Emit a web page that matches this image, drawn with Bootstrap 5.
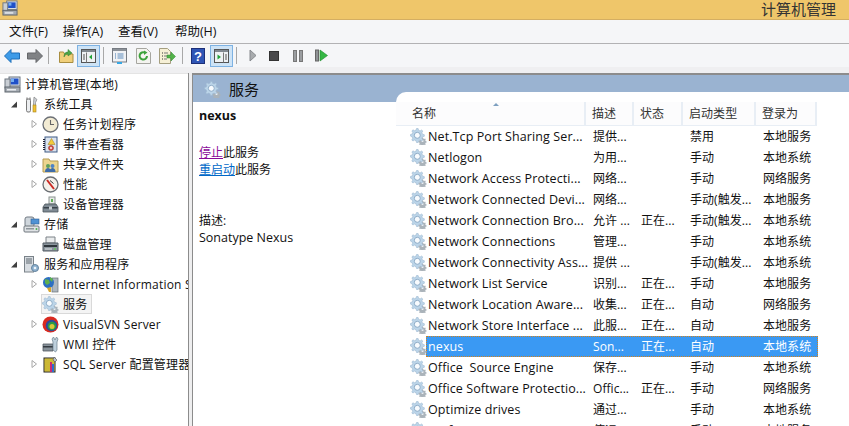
<!DOCTYPE html>
<html lang="zh">
<head>
<meta charset="utf-8">
<title>计算机管理</title>
<link href="https://cdn.jsdelivr.net/npm/bootstrap@5.3.0/dist/css/bootstrap.min.css" rel="stylesheet">
<style>
html,body{height:100%}
body{width:849px;height:426px;overflow:hidden;background:#fff;color:#111;font:12px/1.25 "Open Sans","Noto Sans CJK SC",sans-serif}
svg{display:block;flex:none}
.titlebar{height:20px;background:#efc66a;border-bottom:1px solid #d4ae62;padding:0 13px 0 2px}
.titlebar span{font-size:15px;line-height:18px;color:#333}
.menubar{height:24px;background:#f5f6f8;border-bottom:1px solid #b2b2b4;padding-left:9px;gap:15px;font-size:12.5px}
.menubar span:last-child{margin-left:2px}
.toolbar{height:23px;background:#f5f6f8;padding-left:4px}
.tsep{width:1px;height:17px;background:#a8a8a8;flex:none}
.tog{width:23px;height:22px;background:#cde3f6;border:1px solid #7db2e3;flex:none}
.gapstrip{height:6px;background:#efeff1}
.mainpane{height:353px;background:#efeff1}
.treepane{width:188px;background:#fff;border-top:1px solid #e4e4e4;overflow:hidden;flex:none}
.splitter{width:4px;background:#eeeeef;border-left:1px solid #8c8c8c;flex:none}
.trow{height:20px;white-space:nowrap;font-size:12px;letter-spacing:.2px}
.tw{width:8px;height:20px;flex:none;margin-right:4px}
.l0{padding-left:4px}.l1{padding-left:10px}.l2{padding-left:30px}
.l1 .tw{margin-right:5px}
.tico{margin-right:4px}
.tsel{background:#f4f4f4;outline:1px solid #d9d9d9;outline-offset:-1px;width:51px;height:20px;margin-left:-1px;padding-left:1px}
.servpane{flex:1;min-width:0;border-top:2px solid #8c8c8c;border-left:1px solid #8c8c8c;background:#fff;position:relative}
.servhead{height:27px;background:#9ab3d1;padding:1px 0 0 11px;gap:8px;font-size:15px}
.detail{position:absolute;left:6px;top:32px;width:190px;font-size:12px;line-height:17px}
.detail b{font-size:12.5px}
.detail a.st{color:#8a0a99}.detail a.re{color:#0068c8}
.stoprow{margin-top:20px}
.descrow{margin-top:34px}
.latin{font-size:12.5px}
.sheet{position:absolute;left:203px;top:17px;right:0;bottom:0;background:#fff;border-top-left-radius:10px;padding-top:10px;overflow:hidden}
.grow{display:grid;grid-template-columns:190px 48px 49px 73px 61px;height:21px;align-items:center;white-space:nowrap;font-size:12px;letter-spacing:.05px;width:421px}
.grow>div{overflow:hidden;padding-left:7px}
.ghead{height:24px;border-bottom:1px solid #e8eef5;color:#333;position:relative}
.ghead>div{height:23px;line-height:23px;border-right:2px solid #e8eef5;background:#fcfcfd;padding-left:6px}
.ghead>div:first-child{padding-left:16px}
.sortm{position:absolute;left:97px;top:1px;width:0;height:0;border:3.5px solid transparent;border-top:0;border-bottom:3px solid #7d9fc0}
.grow .nm{display:flex;align-items:center;padding-left:14px;gap:1px;overflow:visible;font-size:12.5px;letter-spacing:.1px}
.rsel{color:#fff;position:relative}
.rsel>div{position:relative;z-index:1}
.rsel::before{content:"";position:absolute;left:30px;width:392px;height:21px;background:#3a99f3;outline:1px dotted #d2821e;outline-offset:-1px}
.gd{width:17px;height:17px}
.ml7{margin-left:7px}.ml8{margin-left:8px}.ml9{margin-left:9px}.ml5{margin-left:5px}.ml12{margin-left:12px}
.sp1{margin:0 10px 0 5px}.sp2{margin:0 8px 0 3px}.sp3{margin:0 8px 0 6px}.sp4{margin:0 12px 0 3px}
.tgl{margin-left:3px}
</style>
</head>
<body>
<svg width="0" height="0" style="position:absolute">
<defs>
<symbol id="gear" viewBox="0 0 17 17">
<path d="M12 9.500l1 .1.300 1 .9.400.9-.4.600.7-.4.900.3.900 1 .3v1l-1 .3-.3.900.4.900-.7.6-.9-.4-.9.3-.3 1h-1l-.3-1-.9-.3-.9.400-.6-.7.400-.9-.3-.9-1-.3v-1l1-.3.300-.9-.4-.9.700-.6.900.4.900-.4z" fill="#aab3ba"/>
<circle cx="12.500" cy="13" r="1.100" fill="#eef2f5"/>
<path d="M6.500 .5l1.600 0 .5 1.800 1.500.6 1.600-.9 1.100 1.100-.9 1.600.6 1.500 1.800.5v1.600l-1.800.5-.6 1.500.9 1.600-1.100 1.100-1.600-.9-1.500.6-.5 1.800H6.500l-.5-1.800-1.500-.6-1.600.9-1.100-1.100.9-1.600-.6-1.500L.5 8.100V6.500l1.700-.5.6-1.500-.9-1.600 1.100-1.100 1.600.9 1.500-.6z" fill="#bcd5e9" stroke="#9db9d1" stroke-width=".6"/>
<circle cx="7.300" cy="7.300" r="3" fill="#f8fbfe" stroke="#8fadc8"/>
</symbol>
<symbol id="computer" viewBox="0 0 17 17">
<rect x="5" y="1" width="11" height="9" fill="#dfe4ea" stroke="#6a7480"/>
<rect x="6.500" y="2.500" width="8" height="6" fill="#1f50c8"/>
<path d="M7 3h3v3H7z" fill="#74aef0"/>
<rect x="1" y="3" width="5" height="9" fill="#c9ced4" stroke="#6f7780"/>
<rect x="1" y="11" width="15" height="5" fill="#a5abb2" stroke="#5f666e"/>
<rect x="3" y="13" width="9" height="1.500" fill="#e9ecef"/>
</symbol>
<symbol id="tools" viewBox="0 0 17 17">
<path d="M4 1.500v3M7 1.500v3" stroke="#888" stroke-width="1.300"/>
<rect x="3.500" y="3" width="4" height="13" rx="1.500" fill="#eceef0" stroke="#777"/>
<path d="M11 1l3 2.500-1.500 3v3h-2v-3z" fill="#caced3" stroke="#777" stroke-width=".6"/>
<rect x="10" y="9" width="3" height="7" fill="#f1c232" stroke="#a3811c" stroke-width=".6"/>
</symbol>
<symbol id="clock" viewBox="0 0 17 17">
<circle cx="8.500" cy="8.500" r="7.500" fill="#f3ecd4" stroke="#6c7076" stroke-width="1.300"/>
<path d="M8.500 4v4.500H12" fill="none" stroke="#666" stroke-width="1.100"/>
</symbol>
<symbol id="evlog" viewBox="0 0 17 17">
<rect x="3" y="1" width="12" height="15" fill="#dbe4ef" stroke="#3f5b85"/>
<path d="M2 3v11" stroke="#223" stroke-width="2" stroke-dasharray="1 1"/>
<path d="M9.500 2.500l3.500 6H6z" fill="#f3cb3c" stroke="#9a7a18" stroke-width=".5"/>
<circle cx="9" cy="12" r="2.500" fill="#d8534a" stroke="#96302a" stroke-width=".6"/>
<circle cx="9" cy="12" r=".9" fill="#fff"/>
</symbol>
<symbol id="share" viewBox="0 0 17 17">
<path d="M1 3h6l1 2h8v11H1z" fill="#ecd58f" stroke="#b49a52"/>
<circle cx="6" cy="10" r="2" fill="#5fa05a"/>
<circle cx="10.500" cy="10" r="2" fill="#4d83c7"/>
<path d="M3 16c0-3 1.500-4 3-4s3 1 3 4zM8 16c0-3 1-4 2.500-4s3 1 3 4z" fill="#3f6da8"/>
</symbol>
<symbol id="perf" viewBox="0 0 17 17">
<circle cx="8.500" cy="8.500" r="7.500" fill="#f4f1ea" stroke="#6a6f74" stroke-width="1.300"/>
<path d="M5 4l7 9" stroke="#cc2b25" stroke-width="2"/>
<path d="M8 4.500l3.500 3" stroke="#333" stroke-width="1"/>
</symbol>
<symbol id="device" viewBox="0 0 17 17">
<rect x="7" y="1" width="6" height="7" fill="#e8ece9" stroke="#8a9290"/>
<rect x="9" y="3" width="2" height="3" fill="#5fae55"/>
<path d="M3 8h11l2 3v5H1v-5z" fill="#7f8a93" stroke="#4c555c" stroke-width=".8"/>
<rect x="1.500" y="11" width="14" height="1.500" fill="#39424a"/>
<rect x="7" y="10.500" width="3" height="3" fill="#c8ced2"/>
</symbol>
<symbol id="storage" viewBox="0 0 17 17">
<rect x="2" y="1" width="9" height="10" rx="2" fill="#cfd6dc" stroke="#727b84"/>
<rect x="8" y="3" width="8" height="5" fill="#4f92d4" stroke="#2f5f92" stroke-width=".6"/>
<rect x="1" y="10" width="15" height="6" rx="1" fill="#dfe2e5" stroke="#6f767d"/>
<rect x="3" y="12" width="8" height="1.500" fill="#8d959c"/>
<circle cx="13.500" cy="13" r="1" fill="#4caf50"/>
</symbol>
<symbol id="disk" viewBox="0 0 17 17">
<path d="M4 1h9v6H4z" fill="#e9ebec" stroke="#7c8388"/>
<path d="M1 7h15v8H1z" fill="#8c969e" stroke="#535b62"/>
<rect x="2" y="9" width="13" height="2" fill="#2f363c"/>
<circle cx="13" cy="13" r="1" fill="#63c75e"/>
<rect x="3" y="12.500" width="7" height="1" fill="#dfe3e6"/>
</symbol>
<symbol id="server" viewBox="0 0 17 17">
<rect x="1.500" y="0.500" width="9" height="15.500" fill="#d8dde2" stroke="#7a8289"/>
<path d="M3 3h6M3 5h6M3 7h6" stroke="#5f6870" stroke-width="1"/>
<circle cx="12" cy="12" r="3.500" fill="#8fb2d0" stroke="#66859f"/>
<circle cx="12" cy="12" r="1.300" fill="#eef5fb"/>
</symbol>
<symbol id="iis" viewBox="0 0 17 17">
<rect x="10" y="2" width="6" height="14" fill="#aeb7bf" stroke="#676f76" stroke-width=".7"/>
<circle cx="6.500" cy="6.500" r="5.500" fill="#2c6fc2"/>
<path d="M3 3l4 1 1 3-3 2-2-2zM8 1l3 2-1 3-2-2z" fill="#5fb04d"/>
<path d="M5 12l2 4h2v-5z" fill="#d7a52b"/>
</symbol>
<symbol id="svn" viewBox="0 0 17 17">
<circle cx="8.500" cy="8.500" r="8" fill="#d92a20"/>
<circle cx="9.500" cy="9.500" r="5.800" fill="#2d4a9b"/>
<circle cx="10" cy="10" r="4.300" fill="#2c9a44"/>
<circle cx="10" cy="10.500" r="2.500" fill="#d8c938"/>
</symbol>
<symbol id="wmi" viewBox="0 0 17 17">
<path d="M1 8h10v7H1z" fill="#88929a" stroke="#505860" stroke-width=".8"/>
<rect x="1" y="10" width="10" height="1.500" fill="#343b41"/>
<path d="M11 14V6l-1-3 1.500-2L13 4l1.500-3L16 3l-1 3v8l-1.500 2z" fill="#bfd0dc" stroke="#6c7f8c" stroke-width=".7"/>
</symbol>
<symbol id="sql" viewBox="0 0 17 17">
<rect x="2" y="2" width="11" height="14" fill="#f6df4a" stroke="#222"/>
<path d="M3 4h9M3 6h9M3 8h9M3 10h9M3 12h9M3 14h9" stroke="#8e7d1a" stroke-width=".8"/>
<path d="M8 6h2v10H8z" fill="#cb2b6f"/><path d="M10 8h2v8h-2z" fill="#2b6fd0"/>
<path d="M12 1l3 3-2 2-2-2z" fill="#b9c2c9" stroke="#555" stroke-width=".6"/>
</symbol>
</defs>
</svg>

<header class="titlebar d-flex justify-content-between align-items-start">
<svg width="16" height="16"><use href="#computer"/></svg>
<span>计算机管理</span>
</header>
<nav class="menubar d-flex align-items-center">
<span>文件(F)</span><span>操作(A)</span><span>查看(V)</span><span>帮助(H)</span>
</nav>
<div class="toolbar d-flex align-items-center">
<svg width="16" height="14" viewBox="0 0 16 14"><path d="M7 .5v3.500h8.500v6H7v3.500L.5 7z" fill="#3d9be8" stroke="#1f6fb8"/></svg>
<svg class="ml7" width="16" height="14" viewBox="0 0 16 14"><path d="M9 .5v3.500H.5v6H9v3.500L15.500 7z" fill="#808285" stroke="#65676a"/></svg>
<div class="tsep sp1"></div>
<svg width="15" height="15" viewBox="0 0 15 15"><path d="M.5 4h4l1 2h8.500v8.500H.500z" fill="#f0cf7a" stroke="#a88d3f"/><path d="M5 9c0-3 1-5 4-5V1.500L13 5 9 8V6C7 6 6 7 5 9z" fill="#4da64a" stroke="#2f7d2e" stroke-width=".5"/></svg>
<div class="tog tgl d-flex align-items-center justify-content-center"><svg width="15" height="14" viewBox="0 0 15 14"><rect x=".5" y=".5" width="14" height="13" fill="#eef1f4" stroke="#555"/><rect x="1" y="1" width="13" height="2" fill="#808890"/><path d="M5.500 3.500v10" stroke="#777"/><path d="M2 6h2M2 8h2M2 10h2" stroke="#555"/><path d="M11 5.500v5L8 8z" fill="#23a33a"/></svg></div>
<div class="tsep sp2"></div>
<svg width="15" height="16" viewBox="0 0 15 16"><rect x=".5" y=".5" width="14" height="13.500" fill="#f0f2f5" stroke="#767b82"/><rect x="1" y="1" width="13" height="2" fill="#8b9198"/><path d="M3 6h1M3 8h1M3 10h1" stroke="#3f74ad"/><path d="M5.500 6h6M5.500 8h6M5.500 10h6" stroke="#5f8dbd"/><rect x="5" y="14" width="5" height="2" fill="#35a7e5"/></svg>
<svg class="ml9" width="15" height="16" viewBox="0 0 15 16"><path d="M.5.500h10l4 4v11H.500z" fill="#f4f4f0" stroke="#a6a6a0"/><path d="M11 8A3.700 3.700 0 1 1 9 4.600" fill="none" stroke="#3ca23b" stroke-width="2"/><path d="M8 2.500l3.500 2L8 7z" fill="#3ca23b"/></svg>
<svg class="ml8" width="17" height="16" viewBox="0 0 17 16"><path d="M.5.500h8l3 3v12H.500z" fill="#f6f0d6" stroke="#a59f80"/><path d="M3 5h1M3 8h1M3 11h1" stroke="#333"/><path d="M5 5h4M5 8h4M5 11h3" stroke="#777"/><path d="M8 7h4V4l4.500 4.500L12 13v-3H8z" fill="#53b24a" stroke="#2f8a30" stroke-width=".5"/></svg>
<div class="tsep sp3"></div>
<svg width="14" height="16" viewBox="0 0 14 16"><rect x=".5" y=".5" width="13" height="15" fill="#2f55b5" stroke="#1c2f78"/><text x="7" y="13" font-family="Liberation Sans" font-weight="700" font-size="13" fill="#fff" text-anchor="middle">?</text></svg>
<div class="tog d-flex align-items-center justify-content-center ml5"><svg width="15" height="14" viewBox="0 0 15 14"><rect x=".5" y=".5" width="14" height="13" fill="#eef1f4" stroke="#555"/><rect x="1" y="1" width="13" height="2" fill="#808890"/><path d="M9.500 3.500v10" stroke="#777"/><path d="M11 6h2M11 8h2M11 10h2" stroke="#555"/><path d="M3.500 5.500v5L7 8z" fill="#23a33a"/></svg></div>
<div class="tsep sp4"></div>
<svg width="8" height="13" viewBox="0 0 8 13"><path d="M1 1l6 5.500L1 12z" fill="#a8abae" stroke="#868a8e"/></svg>
<svg class="ml12" width="10" height="10" viewBox="0 0 10 10"><rect x=".5" y=".5" width="9" height="9" fill="#4a4a4c" stroke="#333"/></svg>
<svg style="margin-left:14px" width="10" height="12" viewBox="0 0 10 12"><rect x=".5" y=".5" width="3" height="11" fill="#9a9da0" stroke="#777"/><rect x="6.500" y=".5" width="3" height="11" fill="#9a9da0" stroke="#777"/></svg>
<svg class="ml12" width="13" height="13" viewBox="0 0 13 13"><rect x=".5" y="1" width="3" height="11" fill="#8f9296" stroke="#666"/><path d="M5 1l7.500 5.500L5 12z" fill="#35b744" stroke="#1e8a2e" stroke-width=".6"/></svg>
</div>
<div class="gapstrip"></div>

<main class="mainpane d-flex">
<aside class="treepane">
<div class="trow d-flex align-items-center l0"><svg class="tico" width="17" height="17"><use href="#computer"/></svg>计算机管理(本地)</div>
<div class="trow d-flex align-items-center l1"><svg class="tw" viewBox="0 0 8 20"><path d="M1 13.500L7 13.500 7 7.500z" fill="#404040"/></svg><svg class="tico" width="17" height="17"><use href="#tools"/></svg>系统工具</div>
<div class="trow d-flex align-items-center l2"><svg class="tw" viewBox="0 0 8 20"><path d="M2 6.500l4.500 3.500L2 13.500z" fill="#fff" stroke="#a6a6a6"/></svg><svg class="tico" width="17" height="17"><use href="#clock"/></svg>任务计划程序</div>
<div class="trow d-flex align-items-center l2"><svg class="tw" viewBox="0 0 8 20"><path d="M2 6.500l4.500 3.500L2 13.500z" fill="#fff" stroke="#a6a6a6"/></svg><svg class="tico" width="17" height="17"><use href="#evlog"/></svg>事件查看器</div>
<div class="trow d-flex align-items-center l2"><svg class="tw" viewBox="0 0 8 20"><path d="M2 6.500l4.500 3.500L2 13.500z" fill="#fff" stroke="#a6a6a6"/></svg><svg class="tico" width="17" height="17"><use href="#share"/></svg>共享文件夹</div>
<div class="trow d-flex align-items-center l2"><svg class="tw" viewBox="0 0 8 20"><path d="M2 6.500l4.500 3.500L2 13.500z" fill="#fff" stroke="#a6a6a6"/></svg><svg class="tico" width="17" height="17"><use href="#perf"/></svg>性能</div>
<div class="trow d-flex align-items-center l2"><span class="tw"></span><svg class="tico" width="17" height="17"><use href="#device"/></svg>设备管理器</div>
<div class="trow d-flex align-items-center l1"><svg class="tw" viewBox="0 0 8 20"><path d="M1 13.500L7 13.500 7 7.500z" fill="#404040"/></svg><svg class="tico" width="17" height="17"><use href="#storage"/></svg>存储</div>
<div class="trow d-flex align-items-center l2"><span class="tw"></span><svg class="tico" width="17" height="17"><use href="#disk"/></svg>磁盘管理</div>
<div class="trow d-flex align-items-center l1"><svg class="tw" viewBox="0 0 8 20"><path d="M1 13.500L7 13.500 7 7.500z" fill="#404040"/></svg><svg class="tico" width="17" height="17"><use href="#server"/></svg>服务和应用程序</div>
<div class="trow d-flex align-items-center l2"><svg class="tw" viewBox="0 0 8 20"><path d="M2 6.500l4.500 3.500L2 13.500z" fill="#fff" stroke="#a6a6a6"/></svg><svg class="tico" width="17" height="17"><use href="#iis"/></svg>Internet Information Services (IIS)</div>
<div class="trow d-flex align-items-center l2"><span class="tw"></span><div class="tsel d-flex align-items-center"><svg class="tico" width="17" height="17"><use href="#gear"/></svg>服务</div></div>
<div class="trow d-flex align-items-center l2"><svg class="tw" viewBox="0 0 8 20"><path d="M2 6.500l4.500 3.500L2 13.500z" fill="#fff" stroke="#a6a6a6"/></svg><svg class="tico" width="17" height="17"><use href="#svn"/></svg>VisualSVN Server</div>
<div class="trow d-flex align-items-center l2"><span class="tw"></span><svg class="tico" width="17" height="17"><use href="#wmi"/></svg>WMI 控件</div>
<div class="trow d-flex align-items-center l2"><svg class="tw" viewBox="0 0 8 20"><path d="M2 6.500l4.500 3.500L2 13.500z" fill="#fff" stroke="#a6a6a6"/></svg><svg class="tico" width="17" height="17"><use href="#sql"/></svg>SQL Server 配置管理器</div>
</aside>
<div class="splitter"></div>
<section class="servpane">
<div class="servhead d-flex align-items-center"><svg width="17" height="17"><use href="#gear"/></svg><span>服务</span></div>
<div class="detail">
<b>nexus</b>
<div class="stoprow"><a class="st" href="#">停止</a>此服务</div>
<div><a class="re" href="#">重启动</a>此服务</div>
<div class="descrow">描述:</div>
<div class="latin">Sonatype Nexus</div>
</div>
<div class="sheet">
<div class="grow ghead"><div>名称</div><div>描述</div><div>状态</div><div>启动类型</div><div>登录为</div><i class="sortm"></i></div>
<div class="grow"><div class="nm"><svg class="gd"><use href="#gear"/></svg><span>Net.Tcp Port Sharing Ser...</span></div><div>提供...</div><div></div><div>禁用</div><div>本地服务</div></div>
<div class="grow"><div class="nm"><svg class="gd"><use href="#gear"/></svg><span>Netlogon</span></div><div>为用...</div><div></div><div>手动</div><div>本地系统</div></div>
<div class="grow"><div class="nm"><svg class="gd"><use href="#gear"/></svg><span>Network Access Protecti...</span></div><div>网络...</div><div></div><div>手动</div><div>网络服务</div></div>
<div class="grow"><div class="nm"><svg class="gd"><use href="#gear"/></svg><span>Network Connected Devi...</span></div><div>网络...</div><div></div><div>手动(触发...</div><div>本地服务</div></div>
<div class="grow"><div class="nm"><svg class="gd"><use href="#gear"/></svg><span>Network Connection Bro...</span></div><div>允许 ...</div><div>正在...</div><div>手动(触发...</div><div>本地系统</div></div>
<div class="grow"><div class="nm"><svg class="gd"><use href="#gear"/></svg><span>Network Connections</span></div><div>管理...</div><div></div><div>手动</div><div>本地系统</div></div>
<div class="grow"><div class="nm"><svg class="gd"><use href="#gear"/></svg><span>Network Connectivity Ass...</span></div><div>提供 ...</div><div></div><div>手动(触发...</div><div>本地系统</div></div>
<div class="grow"><div class="nm"><svg class="gd"><use href="#gear"/></svg><span>Network List Service</span></div><div>识别...</div><div>正在...</div><div>手动</div><div>本地服务</div></div>
<div class="grow"><div class="nm"><svg class="gd"><use href="#gear"/></svg><span>Network Location Aware...</span></div><div>收集...</div><div>正在...</div><div>自动</div><div>网络服务</div></div>
<div class="grow"><div class="nm"><svg class="gd"><use href="#gear"/></svg><span>Network Store Interface ...</span></div><div>此服...</div><div>正在...</div><div>自动</div><div>本地服务</div></div>
<div class="grow rsel"><div class="nm"><svg class="gd"><use href="#gear"/></svg><span>nexus</span></div><div>Son...</div><div>正在...</div><div>自动</div><div>本地系统</div></div>
<div class="grow"><div class="nm"><svg class="gd"><use href="#gear"/></svg><span>Office &nbsp;Source Engine</span></div><div>保存...</div><div></div><div>手动</div><div>本地系统</div></div>
<div class="grow"><div class="nm"><svg class="gd"><use href="#gear"/></svg><span>Office Software Protectio...</span></div><div>Offic...</div><div>正在...</div><div>手动</div><div>网络服务</div></div>
<div class="grow"><div class="nm"><svg class="gd"><use href="#gear"/></svg><span>Optimize drives</span></div><div>通过...</div><div></div><div>手动</div><div>本地系统</div></div>
<div class="grow"><div class="nm"><svg class="gd"><use href="#gear"/></svg><span>Performance Counter</span></div><div>使远...</div><div></div><div>手动</div><div>本地服务</div></div>
</div>
</section>
</main>
<script src="https://cdn.jsdelivr.net/npm/bootstrap@5.3.0/dist/js/bootstrap.bundle.min.js"></script>
</body>
</html>
